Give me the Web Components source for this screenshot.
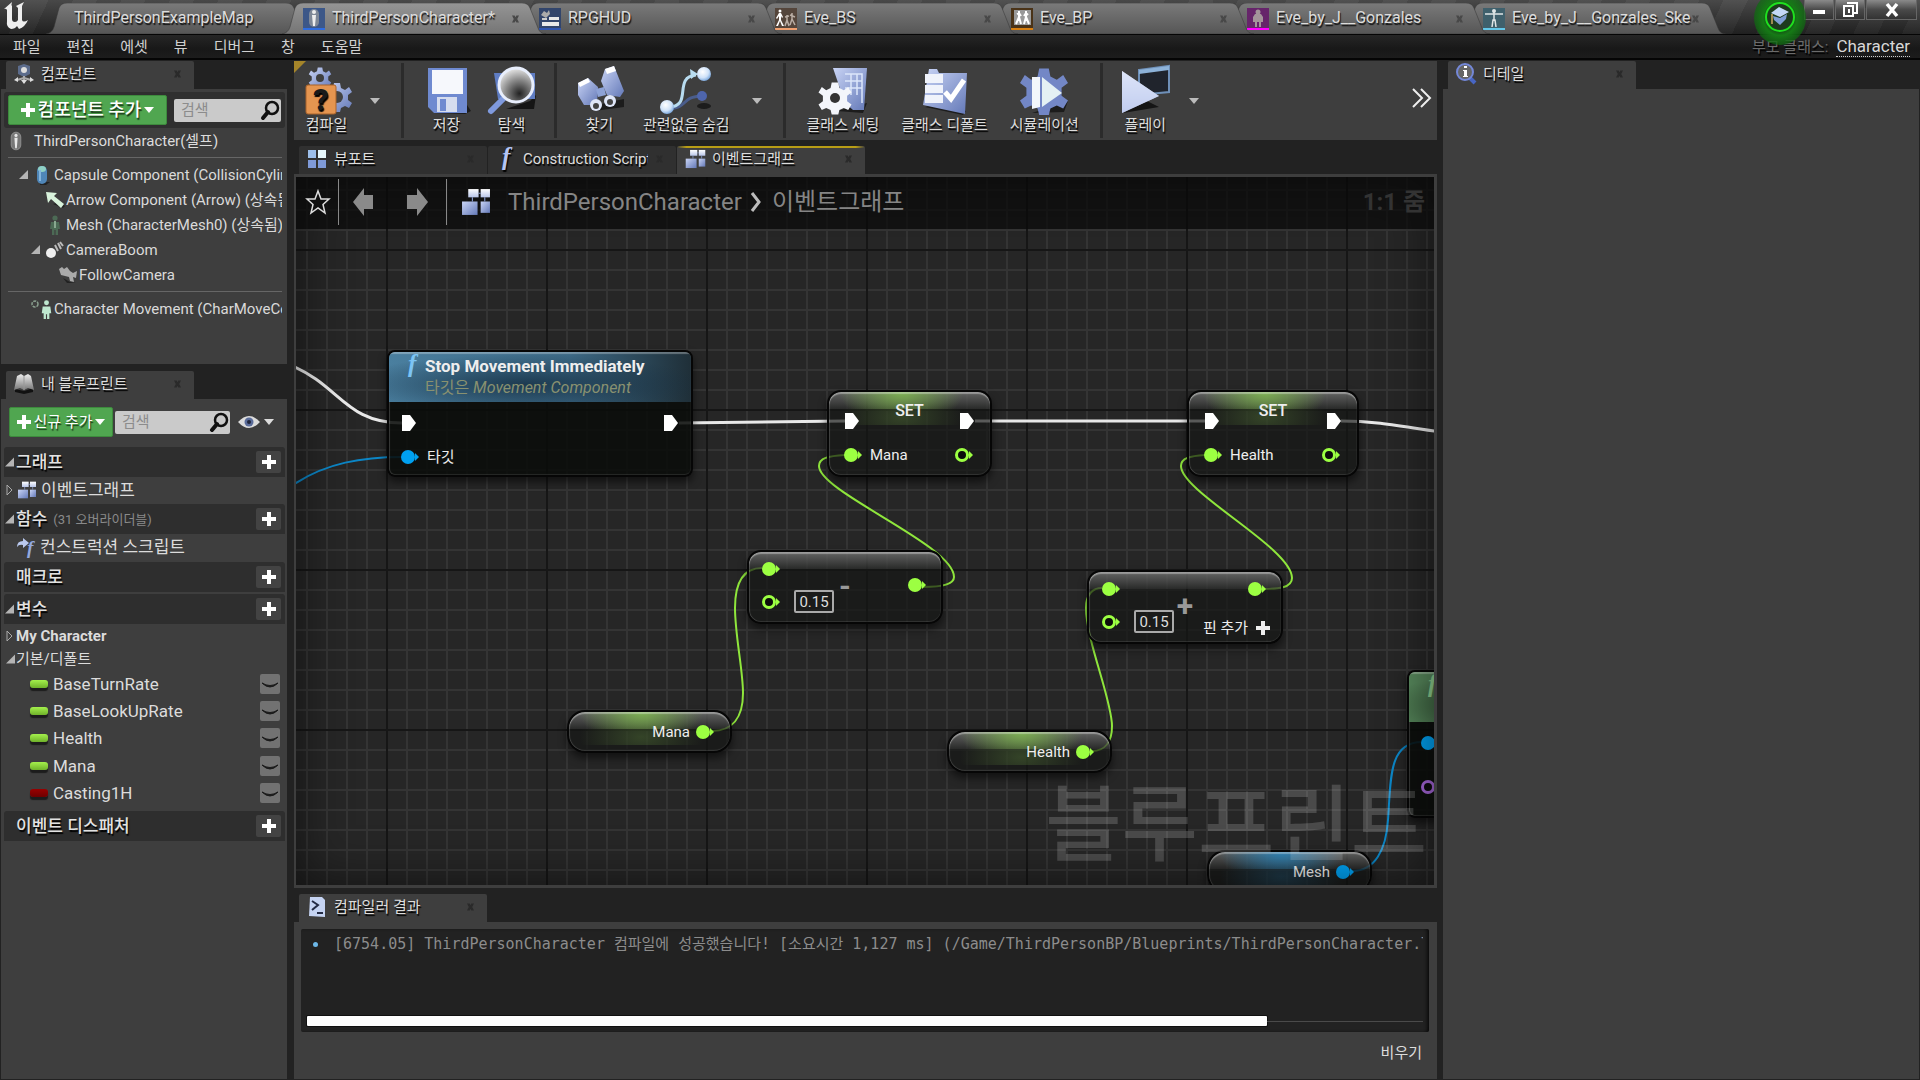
<!DOCTYPE html>
<html lang="ko">
<head>
<meta charset="utf-8">
<title>ThirdPersonCharacter</title>
<style>
  html, body { margin: 0; height: 100%; }
  body {
    background: #222;
    color: #dcdcdc;
    font-family: Roboto, "Noto Sans CJK KR", sans-serif;
    font-size: 15px;
    line-height: 20px;
    overflow: hidden;
  }
</style>
</head>
<body>
<ue-app></ue-app>

<script>
'use strict';

/*
Shared bits
*/

const baseStyle = `
  * { box-sizing: border-box; }
  button {
    margin: 0; padding: 0; border: 0; background: none;
    color: inherit; font: inherit; text-shadow: inherit; cursor: pointer;
  }
  input { font: inherit; margin: 0; }
  ul { list-style: none; margin: 0; padding: 0; }
`;

function define(name, html, setup) {
  const template = document.createElement('template');
  template.innerHTML = html.replace('<style>', '<style>' + baseStyle);
  customElements.define(name, class extends HTMLElement {
    constructor() {
      super();
      this.attachShadow({ mode: 'open' }).appendChild(template.content.cloneNode(true));
    }
    connectedCallback() {
      if (setup) setup(this, this.shadowRoot);
    }
  });
}

/*
Icons.  Each entry is [viewBox, markup]
*/

const defs = `
  <defs>
    <linearGradient id="blue" x1="0" y1="0" x2="1" y2="1"><stop offset="0" stop-color="#c9d4f5"/><stop offset="1" stop-color="#6479b8"/></linearGradient>
    <linearGradient id="pale" x1="0" y1="0" x2="0" y2="1"><stop offset="0" stop-color="#fff"/><stop offset="1" stop-color="#b9c6ea"/></linearGradient>
    <linearGradient id="grey" x1="0" y1="0" x2="0" y2="1"><stop offset="0" stop-color="#eee"/><stop offset="1" stop-color="#777"/></linearGradient>
    <radialGradient id="lens" cx=".6" cy=".75" r=".8"><stop offset="0" stop-color="#222"/><stop offset=".5" stop-color="#888"/><stop offset="1" stop-color="#f4f4f4"/></radialGradient>
    <radialGradient id="ball" cx=".4" cy=".35" r=".7"><stop offset="0" stop-color="#fff"/><stop offset=".6" stop-color="#cfe2f8"/><stop offset="1" stop-color="#6f9fd8"/></radialGradient>
  </defs>`;

const gear = 'M-3-14H3L4-9 8-7 12-10 15-5 11-2V3L15 6 12 11 8 9 4 11 3 15H-3L-4 11-8 9-12 11-15 6-11 3V-2L-15-5-12-10-8-7-4-9Z';

const blocks = `
  <rect x="7" y="1" width="10" height="8" fill="url(#pale)"/><rect x="19" y="1" width="9" height="8" fill="url(#pale)"/>
  <rect x="1" y="13" width="15" height="13" fill="url(#blue)"/><rect x="19" y="13" width="9" height="11" fill="url(#blue)"/>
  <path d="M11 9V13M17 5H19M23 9V13" stroke="#8fa3d9" stroke-width="1"/>`;

const human = '<circle cx="10" cy="4" r="2.6"/><path d="M6 8H14L15 15H13V21H10.600V16H9.400V21H7V15H5Z"/>';

const icons = {
  logo: ['0 0 26 28', '<path d="M1 7 9 0Q8 3 9 4V17Q9 20 12 20Q14 20 15 18V6L13 4 21 0 19 4V18Q20 21 25 18 22 25 16 27L14 24Q12 27 8 27Q3 25 4 19V8Q3 6 1 7Z" fill="#eee"/>'],
  character: ['0 0 20 24', '<rect x="4" y="1" width="12" height="22" rx="6" fill="#777" stroke="#999"/><g fill="#e8e8e8"><circle cx="10" cy="5" r="2"/><path d="M8 8H12L11.500 15 11 21H9L8.500 15Z"/></g>'],
  docCharacter: ['0 0 22 22', '<rect width="22" height="22" fill="#3c5788"/><rect y="20" width="22" height="2" fill="#2f6de0"/><rect x="6" y="1" width="10" height="18" rx="5" fill="#7e8897"/><g fill="#eee"><circle cx="11" cy="4" r="2"/><path d="M9 7H13L12 18H10Z"/></g>'],
  docHud: ['0 0 22 22', '<rect width="22" height="22" fill="#32456b"/><rect y="20" width="22" height="2" fill="#2f55b0"/><path d="M5 3 8 5 10 2 11 6 7 10 2 7Z" fill="#aaa"/><path d="M10 9H20V12H10ZM3 14H20V18H3Z" fill="#e8e8e8"/><path d="M3 10H8V12H3Z" fill="#ccc"/>'],
  docBlend: ['0 0 22 22', '<rect width="22" height="22" fill="#54453b"/><rect y="20" width="22" height="2" fill="#f0a070"/><g fill="#fff"><circle cx="5" cy="3" r="1.500"/><path d="M4 5H6L8 9 7 10 6 8V12L9 18H7L5 13 3 18H1L4 12V8L2 11 1 10Z"/></g><g stroke="#b9ada4" stroke-width="1.500" fill="none"><path d="M12 7V12L10 18M12 12 14 18M17 5V11L15 17M17 11 20 17M10 9 14 8M15 7 20 9"/></g>'],
  docAnim: ['0 0 22 22', '<rect width="22" height="22" fill="#4a3318"/><rect y="20" width="22" height="2" fill="#d87f10"/><rect x="3" y="2" width="17" height="15" fill="#999"/><g stroke="#fff" stroke-width="2" fill="none"><path d="M8 3V9L5 16M8 9 10 16M15 3V9L13 16M15 9 18 16M6 6 8 5 10 8M13 8 15 5 17 7"/></g>'],
  docMesh: ['0 0 22 22', '<rect width="22" height="22" fill="#66256a"/><rect y="20" width="22" height="2" fill="#f0f"/><g fill="#a3949a" transform="translate(1 0)"><circle cx="10" cy="4" r="2.500"/><path d="M7 6H13L15 9V14H13V19H11V14H9V19H7V14H5V9Z"/></g>'],
  docSkeleton: ['0 0 22 22', '<rect width="22" height="22" fill="#3f606c"/><rect y="20" width="22" height="2" fill="#64c8ea"/><g stroke="#dfe5e6" stroke-width="1.500" fill="none"><path d="M2 6H20M11 3V13M9 19 10 12H12L13 19"/></g><circle cx="11" cy="3" r="2" fill="#dfe5e6"/>'],
  components: ['0 0 22 22', '<path d="M5 3 11 1 17 3V11L11 14 5 11Z" fill="#5c6c8c"/><circle cx="11" cy="7" r="3" fill="#ddd"/><path d="M11 13V20M11 15 4 17M11 15 18 17" stroke="#aaa" stroke-width="2"/><path d="M8 17H14L11 21ZM1 17 5 14V19ZM21 17 17 14V19Z" fill="#ddd"/>'],
  blueprint: ['0 0 22 22', '<path d="M2 16 11 18 20 15V19L11 21 2 19Z" fill="#111"/><path d="M4 3 8 1 11 3 15 1 18 3 21 17 15 15 11 17 7 15 1 17Z" fill="url(#grey)"/><path d="M11 3V17" stroke="#999"/>'],
  viewport: ['0 0 20 22', '<path d="M11 2H19V10H11Z" fill="#e6f6fb"/><path d="M1 12H9V20H1ZM11 12H19V20H11Z" fill="#7f9ad8"/><path d="M1 2H9V10H1Z" fill="#9dbfea"/>'],
  fn: ['0 0 16 22', '<text x="4" y="17" font-family="Liberation Serif, serif" font-style="italic" font-weight="700" font-size="25" fill="currentColor">f</text>'],
  blocks: ['0 0 29 27', blocks],
  details: ['0 0 22 24', '<path d="M14 15 20 21" stroke="#4866c4" stroke-width="4"/><circle cx="10" cy="10" r="8" fill="#666" stroke="#7488d8" stroke-width="2"/><path d="M9 4H12V6H9ZM8 8H12V14H13V15H8V14H9V9H8Z" fill="#fff"/>'],
  compiler: ['0 0 18 22', '<path d="M2 1H14L17 4V21L1 20Z" fill="#c5d3f2"/><path d="M4 5 10 9 4 14M9 17H15" stroke="#222a44" stroke-width="2" fill="none"/>'],
  search: ['0 0 20 20', '<circle cx="12" cy="8" r="6" fill="none" stroke="#111" stroke-width="2.500"/><path d="M8 12 3 18" stroke="#111" stroke-width="4" stroke-linecap="round"/>'],
  plus: ['0 0 14 14', '<path d="M5 0H9V5H14V9H9V14H5V9H0V5H5Z" fill="currentColor"/>'],
  down: ['0 0 10 6', '<path d="M0 0H10L5 6Z" fill="currentColor"/>'],
  open: ['0 0 10 10', '<path d="M10 0V10H0Z" fill="#b4b4b4"/>'],
  closed: ['0 0 7 12', '<path d="M1 1 6 6 1 11Z" fill="none" stroke="#aaa"/>'],
  close: ['0 0 8 8', '<path d="M0 0H3L4 2 5 0H8L6 4 8 8H5L4 6 3 8H0L2 4Z" fill="currentColor"/>'],
  capsule: ['0 0 18 20', '<path d="M6 17H16L12 20H6Z" fill="#222"/><rect x="3" y="1" width="10" height="18" rx="5" fill="#4f86b8"/><ellipse cx="8" cy="4" rx="4" ry="3" fill="#8fd0c4"/><path d="M6 5V16" stroke="#83b4dc" stroke-width="2"/>'],
  arrow: ['0 0 20 18', '<path d="M8 13 18 17 20 15 14 11Z" fill="#222"/><path d="M1 1 12 2 9 5 19 13 16 17 6 8 3 12Z" fill="#d9f3dc"/>'],
  mesh: ['0 0 20 22', '<g fill="#4c6a55">' + human + '</g><path d="M9 7H11V14H9Z" fill="#89a890"/>'],
  boom: ['0 0 18 18', '<circle cx="5" cy="12" r="5" fill="#eee"/><path d="M9 4 12 10M12 2 15 8M14 1 17 5" stroke="#bbb" stroke-width="2"/>'],
  camera: ['0 0 20 18', '<path d="M1 3 4 1 6 3 9 1 12 5 15 7 19 5 18 12 15 11 16 16 12 15 11 11 3 9Z" fill="#aaa"/><path d="M5 12 12 16 18 17H9Z" fill="#222"/>'],
  movement: ['0 0 20 20', '<circle cx="2" cy="5" r="3" fill="none" stroke="#8aa08f" stroke-width="1.500" stroke-dasharray="3 1"/><g fill="#bfe8d0" transform="translate(4 0) scale(.95)">' + human + '</g>'],
  construct: ['0 0 20 20', '<path d="M1 10Q1 4 7 4V1L13 6 7 11V8Q3 7 1 10Z" fill="#b9c8ee"/><text x="11" y="17" font-family="Liberation Serif, serif" font-style="italic" font-weight="700" font-size="19" fill="#93a8dd">f</text>'],
  eye: ['0 0 22 14', '<path d="M0 7Q11-5 22 7Q11 19 0 7Z" fill="#dcdcdc"/><circle cx="11" cy="7" r="4.500" fill="#5a6c9a"/><circle cx="11" cy="7" r="2" fill="#20263c"/>'],
  hidden: ['0 0 20 20', '<rect width="20" height="20" rx="2" fill="#727272"/><path d="M2 9Q10 17 18 9Q10 14 2 9Z" fill="#1a1a1a" stroke="#1a1a1a"/>'],
  star: ['0 0 26 26', '<path d="M13 2 16 10 24 10 18 15.500 20 24 13 19 6 24 8 15.500 2 10 10 10Z" fill="none" stroke="#ddd" stroke-width="1.500"/>'],
  back: ['0 0 22 30', '<path d="M0 15 11 1V8H20V22H11V29Z" fill="#8a8a8a"/>'],
  forward: ['0 0 22 30', '<path d="M22 15 11 1V8H1V22H11V29Z" fill="#8a8a8a"/>'],
  crumb: ['0 0 12 20', '<path d="M2 1 9 10 2 19" fill="none" stroke="#bbb" stroke-width="3"/>'],
  more: ['0 0 20 20', '<path d="M1 1 10 10 1 19M9 1 18 10 9 19" fill="none" stroke="#eee" stroke-width="2"/>'],
  tutorial: ['0 0 54 46', '<radialGradient id="g" cy=".5"><stop offset=".3" stop-color="#102a10"/><stop offset=".65" stop-color="#167a16"/><stop offset="1" stop-color="#0e6a10" stop-opacity=".7"/></radialGradient><ellipse cx="27" cy="18" rx="26" ry="27" fill="url(#g)"/><circle cx="27" cy="17" r="14" fill="#1d3a1d" stroke="#1fe01f" stroke-width="2"/><path d="M18 13 26 7 36 12 27 17Z" fill="#c4d8f6"/><path d="M20 16 27 18 34 14 33 19 27 25 21 20Z" fill="#7f9dd4"/><path d="M19 14V24" stroke="#a08a50" stroke-width="2"/>'],
  compile: ['0 0 52 50', `<g transform="translate(19 13) scale(.75)" fill="url(#blue)"><path d="${gear}"/></g><circle cx="19" cy="13" r="4" fill="#3e3e3e"/><g transform="translate(36 32) scale(1)" fill="url(#blue)"><path d="${gear}"/></g><circle cx="36" cy="32" r="6" fill="#444"/><rect x="5" y="20" width="30" height="29" rx="2" fill="#e59550" stroke="#a8622a"/><text x="20" y="45" text-anchor="middle" font-family="Roboto, sans-serif" font-weight="900" font-size="30" fill="#1a1a1a">?</text>`],
  save: ['0 0 52 50', '<path d="M46 40 50 46 44 49 12 48Z" fill="#1c1c1c"/><path d="M7 3H46V48H13L7 42Z" fill="#6f8ad0"/><rect x="11" y="5" width="31" height="24" fill="#f6f8fc"/><rect x="16" y="32" width="20" height="15" fill="#d6ddef"/><rect x="19" y="34" width="6" height="12" fill="#6f8ad0"/>'],
  browse: ['0 0 52 50', '<path d="M20 44H48L50 30 44 36Z" fill="#151515"/><path d="M8 8H49V34H12Z" fill="#5f7dc4"/><path d="M17 34 5 46" stroke="#7f9ade" stroke-width="6" stroke-linecap="round"/><circle cx="30" cy="20" r="17" fill="url(#lens)" stroke="#e8eefc" stroke-width="3"/>'],
  find: ['0 0 52 50', '<path d="M20 46 50 42V34L30 38Z" fill="#1c1c1c"/><path d="M4 18 14 13 24 22 23 40 10 40 4 30Z" fill="url(#blue)"/><path d="M31 4 40 1 50 26 46 32 33 30 27 16Z" fill="url(#blue)"/><path d="M22 24 30 22 32 30 24 32Z" fill="#8da2d6"/><path d="M4 18 14 13 16 17 6 22ZM31 4 40 1 42 6 33 9Z" fill="#fff"/><circle cx="22" cy="40" r="6" fill="#dfe6f8"/><circle cx="36" cy="36" r="6" fill="#dfe6f8"/><circle cx="22" cy="41" r="3" fill="#444"/><circle cx="36" cy="37" r="3" fill="#444"/>'],
  hide: ['0 0 52 50', '<ellipse cx="44" cy="41" rx="7" ry="3" fill="#1c1c1c"/><path d="M8 44C30 42 20 32 42 31" fill="none" stroke="#4a5d8c" stroke-width="3"/><circle cx="42" cy="31" r="5" fill="#4e65ac"/><path d="M8 42C34 42 12 12 36 10" fill="none" stroke="#b8dcf0" stroke-width="3"/><path d="M30 4 38 9 31 14Z" fill="#b8dcf0"/><circle cx="7" cy="42" r="7" fill="url(#ball)"/><circle cx="44" cy="9" r="7" fill="url(#ball)"/>'],
  settings: ['0 0 52 50', '<path d="M20 46 46 48 50 38Z" fill="#1c1c1c"/><path d="M16 3H50L47 45H36L28 38Z" fill="url(#blue)"/><path d="M28 9H45V38M28 16H45M28 23H45M34 9V30M40 9V30" stroke="#dce6fa" stroke-width="1.500" fill="none"/><g transform="translate(18 33) scale(1.1)" fill="#f4f6fb"><path d="'+ gear +'"/></g><circle cx="18" cy="33" r="5" fill="#333"/>'],
  defaults: ['0 0 52 50', '<path d="M6 42 44 50 47 46 20 38Z" fill="#1c1c1c"/><path d="M10 4H18L20 8H48L46 49 4 40Z" fill="url(#blue)"/><path d="M6 9H24V18H6ZM6 20H24V28H6ZM6 30H24V38H6Z" fill="#f0f3fb"/><path d="M26 27 32 34 45 15" fill="none" stroke="#fff" stroke-width="5"/>'],
  simulate: ['0 0 52 50', '<path d="M14 48 46 47 50 36Z" fill="#1c1c1c"/><g transform="translate(26 26) scale(1.600)" fill="#7387c6"><path d="'+ gear +'"/></g><path d="M14 12H22V42L14 44Z" fill="#f2f6fb"/><path d="M24 12 44 28 24 42Z" fill="#e4f1f4"/>'],
  play: ['0 0 52 50', '<path d="M4 48 40 42 28 36Z" fill="#151515"/><path d="M20 5 50 1V27L20 30Z" fill="#20242c" stroke="#6f90b8" stroke-width="2"/><path d="M20 5 50 1V5L20 9Z" fill="#8db2d8"/><path d="M3 6 40 31 3 48Z" fill="url(#pale)"/><path d="M3 6 40 31 3 48Z" fill="#c6d2f4" opacity=".6"/>'],
  minimize: ['0 0 20 20', '<path d="M4 10H16V14H4Z" fill="#fff"/>'],
  restore: ['0 0 20 20', '<path d="M7 3H17V13H14M4 6H13V16H4Z" fill="none" stroke="#fff" stroke-width="2"/><rect x="8" y="9" width="2" height="4" fill="#fff"/>'],
  exit: ['0 0 20 20', '<path d="M5 4 15 16M15 4 5 16" stroke="#fff" stroke-width="3.500"/>'],
  exec: ['0 0 16 18', '<path d="M1 1H9L15 9 9 17H1Z" fill="#fff"/>'],
  pin: ['0 0 20 18', '<circle cx="7" cy="9" r="7" fill="currentColor"/><path d="M14 5 18 9 14 13Z" fill="currentColor"/>'],
  pinEmpty: ['0 0 20 18', '<circle cx="7" cy="9" r="5.500" fill="#0c0c0c" stroke="currentColor" stroke-width="3"/><path d="M14 5 18 9 14 13Z" fill="currentColor"/>'],
};

customElements.define('ue-icon', class extends HTMLElement {
  constructor() {
    super();
    this.attachShadow({ mode: 'open' });
  }
  connectedCallback() {
    const [box, markup] = icons[this.getAttribute('name')];
    const [, , bw, bh] = box.split(' ');
    const w = this.getAttribute('w') || bw;
    const h = this.getAttribute('h') || bh;
    this.shadowRoot.innerHTML = `
      <style>:host { display: inline-flex; flex: none; } svg { display: block; overflow: visible; }</style>
      <svg viewBox="${box}" width="${w}" height="${h}" aria-hidden="true">${defs}${markup}</svg>`;
  }
});

/*
Title bar
*/

define('ue-doc-tab', `
<style>
  :host {
    display: flex; align-items: center; position: relative; flex: none;
    width: 264px; height: 31px; margin-right: -28px; padding: 0 27px 0 21px;
    color: #ddd; font-size: 16px; text-shadow: 1px 2px 1px #111;
  }
  .shape { position: absolute; inset: 0; z-index: -1; }
  .top { stop-color: #7a7a7a; }
  .bottom { stop-color: #565656; }
  :host([active]) .top { stop-color: #959595; }
  :host([active]) .bottom { stop-color: #757575; }
  .text { flex: 1; overflow: hidden; white-space: nowrap; margin-left: 7px; padding-bottom: 2px; }
  .x { color: #484848; }
</style>
<svg class="shape" width="264" height="31" viewBox="0 0 264 31" aria-hidden="true">
  <linearGradient id="fill" x1="0" y1="0" x2="0" y2="1"><stop class="top" offset="0"/><stop class="bottom" offset="1"/></linearGradient>
  <path d="M0 31Q6 30 8 24L13 5Q15 0 21 0H240Q246 0 248 5L256 25Q258 31 264 31Z" fill="url(#fill)" stroke="#333" stroke-opacity=".5"/>
</svg>
<slot name="icon"></slot><span class="text"><slot></slot></span><ue-icon class="x" name="close" w="7" h="8"></ue-icon>
`, (host, root) => {
  if (host.hasAttribute('home')) root.querySelector('.x').remove();
});

define('ue-title-bar', `
<style>
  :host {
    display: flex; align-items: flex-end; height: 34px; padding-left: 3px; isolation: isolate; position: relative;
    background:
      linear-gradient(rgba(90,90,90,.45), rgba(10,10,10,.55)),
      repeating-linear-gradient(115deg, #3a3a3a 0 22px, #4a4a4a 22px 44px);
  }
  .logo { width: 43px; align-self: flex-start; padding-top: 2px; }
  ue-doc-tab:nth-of-type(1) { z-index: 6; }
  ue-doc-tab:nth-of-type(2) { z-index: 7; }
  ue-doc-tab:nth-of-type(3) { z-index: 5; }
  ue-doc-tab:nth-of-type(4) { z-index: 4; }
  ue-doc-tab:nth-of-type(5) { z-index: 3; }
  ue-doc-tab:nth-of-type(6) { z-index: 2; }
  ue-doc-tab:nth-of-type(7) { z-index: 1; }
  .right { margin-left: auto; display: flex; align-self: flex-start; gap: 1px; padding-right: 3px; }
  .tutorial { position: relative; z-index: 9; height: 34px; margin-right: -4px; align-items: flex-start; display: flex; }
  .right button:not(.tutorial) {
    width: 30px; height: 20px; display: flex; align-items: center; justify-content: center;
    border: 1px solid #666; border-top: 0; background: linear-gradient(#8a8a8a, #4a4a4a 50%, #333);
  }
  .right .exit { width: 51px !important; }
</style>
<ue-icon class="logo" name="logo"></ue-icon>
<ue-doc-tab home>ThirdPersonExampleMap</ue-doc-tab>
<ue-doc-tab active><ue-icon slot="icon" name="docCharacter"></ue-icon>ThirdPersonCharacter*</ue-doc-tab>
<ue-doc-tab><ue-icon slot="icon" name="docHud"></ue-icon>RPGHUD</ue-doc-tab>
<ue-doc-tab><ue-icon slot="icon" name="docBlend"></ue-icon>Eve_BS</ue-doc-tab>
<ue-doc-tab><ue-icon slot="icon" name="docAnim"></ue-icon>Eve_BP</ue-doc-tab>
<ue-doc-tab><ue-icon slot="icon" name="docMesh"></ue-icon>Eve_by_J__Gonzales</ue-doc-tab>
<ue-doc-tab><ue-icon slot="icon" name="docSkeleton"></ue-icon>Eve_by_J__Gonzales_Ske</ue-doc-tab>
<div class="right">
  <button class="tutorial" aria-label="튜토리얼"><ue-icon name="tutorial"></ue-icon></button>
  <button aria-label="최소화"><ue-icon name="minimize"></ue-icon></button>
  <button aria-label="복원"><ue-icon name="restore"></ue-icon></button>
  <button class="exit" aria-label="닫기"><ue-icon name="exit"></ue-icon></button>
</div>
`);

define('ue-menu-bar', `
<style>
  :host {
    display: flex; align-items: center; height: 26px; border: 1px solid #050505; border-width: 1px 0 2px;
    background: linear-gradient(#262626, #181818 60%, #1c1c1c); color: #d0d0d0;
  }
  button { padding: 0 13px; height: 20px; }
  .parent { margin-left: auto; color: #6c6c6c; text-shadow: 1px 2px 1px #000; }
  a { color: #d8d8d8; margin: 0 10px 0 8px; font-size: 17px; line-height: 19px; text-decoration: none; border-bottom: 1px dotted #ccc; }
</style>
<button>파일</button><button>편집</button><button>에셋</button><button>뷰</button><button>디버그</button><button>창</button><button>도움말</button>
<span class="parent">부모 클래스:</span><a href="#">Character</a>
`);

/*
Docked panels
*/

define('ue-panel-tab', `
<style>
  :host {
    display: flex; align-items: center; flex: none; width: 188px; height: 28px; padding: 0 13px 2px 7px;
    background: #3e3e3e; border-radius: 2px 2px 0 0; color: #ddd; text-shadow: 1px 2px 1px #000;
  }
  :host([idle]) { background: #303030; }
  :host([current]) { background: linear-gradient(90deg, transparent, #b89d16 5% 95%, transparent) 0 0 / 100% 2px no-repeat #3e3e3e; }
  .icon { width: 22px; display: flex; justify-content: center; }
  .text { flex: 1; overflow: hidden; white-space: nowrap; margin: 0 12px 0 6px; }
  .x { color: #2a2a2a; margin-left: -4px; }
</style>
<span class="icon"><slot name="icon"></slot></span><span class="text"><slot></slot></span><ue-icon class="x" name="close" w="7" h="8"></ue-icon>
`);

define('ue-search', `
<style>
  :host { display: flex; flex: none; align-items: center; height: 23px; background: #cacaca; border-radius: 2px; padding-right: 1px; }
  input { flex: 1; min-width: 0; width: 0; border: 0; background: none; padding: 0 0 0 7px; outline: 0; color: #222; height: 23px; }
  input::placeholder { color: #8c8c8c; opacity: 1; }
</style>
<input type="text" placeholder="검색" aria-label="검색"><ue-icon name="search"></ue-icon>
`);

define('ue-green-button', `
<style>
  :host { display: flex; flex: none; height: 30px; }
  button {
    flex: 1; display: flex; align-items: center; justify-content: center; gap: 3px; color: #fff; white-space: nowrap;
    background: #50a650; border: 1px solid #3d8a3d; border-radius: 2px; text-shadow: 1px 2px 1px #1a3a1a;
  }
</style>
<button><ue-icon name="plus"></ue-icon><slot></slot><ue-icon name="down"></ue-icon></button>
`);

define('ue-tree-row', `
<style>
  :host { display: flex; align-items: center; height: 25px; white-space: nowrap; overflow: hidden; color: #dadada; }
  .icon { display: flex; flex: none; justify-content: center; width: 20px; margin-right: 1px; }
  .twist { flex: none; width: 14px; display: flex; }
</style>
<span class="twist"></span><span class="icon"><slot name="icon"></slot></span><slot></slot>
`, (host, root) => {
  host.style.paddingLeft = (host.getAttribute('depth') || 0) + 'px';
  if (host.hasAttribute('open')) root.querySelector('.twist').innerHTML = '<ue-icon name="open" w="9" h="9"></ue-icon>';
});

define('ue-components-panel', `
<style>
  :host { display: block; }
  .tab { padding: 1px 0 0 5px; }
  .body { background: #3e3e3e; height: 275px; padding: 3px 2px 0 3px; }
  .bar { display: flex; align-items: center; gap: 7px; background: #2f2f2f; height: 36px; padding: 0 4px; border-radius: 3px; }
  ue-green-button { width: 159px; font-size: 18px; font-weight: 500; }
  ue-search { flex: 1; }
  .tree { padding: 0 3px 0 4px; }
  hr { border: 0; height: 1px; background: #666; margin: 4px 0; }
  .self { display: flex; align-items: center; height: 25px; gap: 10px; }
</style>
<div class="tab"><ue-panel-tab><ue-icon slot="icon" name="components"></ue-icon>컴포넌트</ue-panel-tab></div>
<div class="body">
  <div class="bar"><ue-green-button>컴포넌트 추가</ue-green-button><ue-search></ue-search></div>
  <div class="tree">
    <div class="self"><ue-icon name="character" w="16" h="20"></ue-icon><span>ThirdPersonCharacter(셀프)</span></div>
    <hr>
    <ue-tree-row depth="11" open><ue-icon slot="icon" name="capsule"></ue-icon>Capsule Component (CollisionCylinder)</ue-tree-row>
    <ue-tree-row depth="23"><ue-icon slot="icon" name="arrow"></ue-icon>Arrow Component (Arrow) (상속됨)</ue-tree-row>
    <ue-tree-row depth="23"><ue-icon slot="icon" name="mesh"></ue-icon>Mesh (CharacterMesh0) (상속됨)</ue-tree-row>
    <ue-tree-row depth="23" open><ue-icon slot="icon" name="boom"></ue-icon>CameraBoom</ue-tree-row>
    <ue-tree-row depth="36"><ue-icon slot="icon" name="camera"></ue-icon>FollowCamera</ue-tree-row>
    <hr>
    <ue-tree-row depth="11"><ue-icon slot="icon" name="movement"></ue-icon>Character Movement (CharMoveComp)</ue-tree-row>
  </div>
</div>
`);

define('ue-section', `
<style>
  :host {
    display: flex; align-items: center; height: 30px; margin: 0 2px 0 3px; padding: 0 4px 0 1px; background: #2e2e2e;
    border-radius: 3px 3px 0 0; font-size: 17px; font-weight: 500; color: #e2e2e2; text-shadow: 1px 2px 1px #000;
  }
  .twist { width: 11px; flex: none; display: flex; }
  ::slotted(small) { font-size: 13px; font-weight: 400; color: #8a8a8a; margin-left: 6px; padding-top: 2px; text-shadow: none; }
  button {
    margin-left: auto; width: 25px; height: 22px; border-radius: 2px; background: #434343; color: #fff;
    display: flex; align-items: center; justify-content: center;
  }
</style>
<span class="twist"></span><slot></slot><button aria-label="추가"><ue-icon name="plus"></ue-icon></button>
`, (host, root) => {
  if (host.hasAttribute('open')) root.querySelector('.twist').innerHTML = '<ue-icon name="open" w="9" h="10"></ue-icon>';
});

define('ue-variable', `
<style>
  :host { display: flex; align-items: center; padding: 0 7px 0 29px; font-size: 17px; }
  i { width: 18px; height: 8px; border-radius: 3px; margin-right: 5px; background: linear-gradient(#a4f04c, #6fb22a); box-shadow: 0 3px 1px #1c1c1c; }
  :host([type="bool"]) i { background: linear-gradient(#990000, #6e0000); }
  button { margin-left: auto; display: flex; }
</style>
<i></i><slot></slot><button aria-label="공개"><ue-icon name="hidden"></ue-icon></button>
`);

define('ue-my-blueprint', `
<style>
  :host { display: flex; flex-direction: column; }
  .tab { padding-left: 5px; }
  .body { flex: 1; background: #3e3e3e; }
  .bar { display: flex; align-items: center; padding: 8px 0 10px 8px; }
  ue-green-button { width: 104px; margin-right: 2px; }
  ue-search { width: 115px; margin-right: 8px; }
  .eye { display: flex; align-items: center; gap: 4px; }
  .row { display: flex; align-items: center; gap: 4px; height: 27px; padding: 0 0 2px 5px; font-size: 17px; }
  .item { height: 28px; padding-left: 15px; }
  .cat { height: 23px; padding-bottom: 0; font-size: 15px; }
  .cat ue-icon { width: 7px; margin-right: -1px; }
  ue-section + ue-section { margin-top: 2px; }
  .vars { display: grid; grid-auto-rows: 1fr; height: 141px; padding-bottom: 4px; }
</style>
<div class="tab"><ue-panel-tab><ue-icon slot="icon" name="blueprint"></ue-icon>내 블루프린트</ue-panel-tab></div>
<div class="body">
  <div class="bar">
    <ue-green-button>신규 추가</ue-green-button><ue-search></ue-search>
    <button class="eye" aria-label="보기 옵션"><ue-icon name="eye"></ue-icon><ue-icon name="down"></ue-icon></button>
  </div>
  <ue-section open>그래프</ue-section>
  <div class="row"><ue-icon name="closed"></ue-icon><ue-icon name="blocks" w="20" h="18"></ue-icon>이벤트그래프</div>
  <ue-section open>함수<small>(31 오버라이더블)</small></ue-section>
  <div class="row item"><ue-icon name="construct"></ue-icon>컨스트럭션 스크립트</div>
  <ue-section>매크로</ue-section>
  <ue-section open>변수</ue-section>
  <div class="row cat"><ue-icon name="closed"></ue-icon><b>My Character</b></div>
  <div class="row cat"><ue-icon name="open" w="9" h="10"></ue-icon>기본/디폴트</div>
  <div class="vars">
    <ue-variable>BaseTurnRate</ue-variable>
    <ue-variable>BaseLookUpRate</ue-variable>
    <ue-variable>Health</ue-variable>
    <ue-variable>Mana</ue-variable>
    <ue-variable type="bool">Casting1H</ue-variable>
  </div>
  <ue-section>이벤트 디스패처</ue-section>
</div>
`);

/*
Toolbar
*/

define('ue-tool-button', `
<style>
  :host { display: flex; }
  button { min-width: 65px; padding: 4px 11px 0; display: flex; flex-direction: column; align-items: center; white-space: nowrap; text-shadow: 1px 2px 1px #000; }
  ::slotted(ue-icon) { margin: 0 -6px; }
</style>
<button><slot name="icon"></slot><slot></slot></button>
`);

define('ue-toolbar', `
<style>
  :host { display: flex; height: 79px; background: linear-gradient(135deg, #a5852a 8px, transparent 9px) #3e3e3e; color: #ddd; }
  .drop { width: 32px; display: flex; align-items: center; justify-content: center; color: #bbb; }
  .sep { width: 3px; margin: 2px 10px; background: #2b2b2b; }
  .more { margin-left: auto; padding-right: 5px; }
</style>
<ue-tool-button><ue-icon slot="icon" name="compile"></ue-icon>컴파일</ue-tool-button>
<button class="drop" aria-label="컴파일 옵션"><ue-icon name="down"></ue-icon></button>
<span class="sep"></span>
<ue-tool-button><ue-icon slot="icon" name="save"></ue-icon>저장</ue-tool-button>
<ue-tool-button><ue-icon slot="icon" name="browse"></ue-icon>탐색</ue-tool-button>
<span class="sep"></span>
<ue-tool-button><ue-icon slot="icon" name="find"></ue-icon>찾기</ue-tool-button>
<ue-tool-button><ue-icon slot="icon" name="hide"></ue-icon>관련없음 숨김</ue-tool-button>
<button class="drop" aria-label="숨김 옵션"><ue-icon name="down"></ue-icon></button>
<span class="sep"></span>
<ue-tool-button><ue-icon slot="icon" name="settings"></ue-icon>클래스 세팅</ue-tool-button>
<ue-tool-button><ue-icon slot="icon" name="defaults"></ue-icon>클래스 디폴트</ue-tool-button>
<ue-tool-button><ue-icon slot="icon" name="simulate"></ue-icon>시뮬레이션</ue-tool-button>
<span class="sep"></span>
<ue-tool-button><ue-icon slot="icon" name="play"></ue-icon>플레이</ue-tool-button>
<button class="drop" aria-label="플레이 옵션"><ue-icon name="down"></ue-icon></button>
<button class="more" aria-label="더 보기"><ue-icon name="more"></ue-icon></button>
`);

/*
Graph nodes.  kind = func | set | op | var
*/

define('bp-node', `
<style>
  :host {
    --tint: 130, 190, 80;
    display: block; position: absolute; color: #eee;
    border: 2px solid #060606; border-radius: 14px;
    box-shadow: 0 5px 8px rgba(0,0,0,.55), inset 0 2px 1px rgba(255,255,255,.35), inset 1px 0 1px rgba(255,255,255,.15), inset 0 -1px 1px rgba(255,255,255,.1);
    background:
      linear-gradient(rgba(200,200,200,.42), rgba(120,120,120,.16) 17px, transparent 17px),
      rgba(20,22,20,.68);
  }
  :host([kind="set"]), :host([kind="var"]) {
    background:
      radial-gradient(ellipse 62px 34px at 45% 0, rgba(var(--tint), .85), transparent) 0 0 / 100% 17px no-repeat,
      radial-gradient(ellipse 62px 32px at 45% 50%, rgba(var(--tint), .25), transparent) 0 17px / 100% 16px no-repeat,
      linear-gradient(rgba(200,200,200,.42), rgba(120,120,120,.16) 17px, transparent 17px),
      rgba(20,22,20,.68);
  }
  :host([kind="var"]) { border-radius: 18px; }
  :host([tint="blue"]) { --tint: 40, 140, 200; }
  :host([kind="func"]) { border-radius: 8px; background: rgba(10,12,10,.88); overflow: hidden; }
  .head { display: none; }
  :host([kind="func"]) .head {
    display: flex; gap: 5px; height: 50px; padding: 3px 10px 0 15px; color: #7cc4f4;
    background: radial-gradient(ellipse 60% 60% at 45% 65%, rgba(20,45,65,.8), transparent), linear-gradient(90deg, #4a7f9f, #3c6884 60%, #1f2f38);
    box-shadow: inset 0 2px 1px rgba(255,255,255,.3);
  }
  :host([tint="green"]) .head { color: #8fcf8f !important; background: radial-gradient(ellipse 60% 60% at 45% 65%, rgba(40,65,40,.8), transparent), #55855a !important; }
  .head div { display: flex; flex-direction: column; white-space: nowrap; }
  ::slotted([slot="title"]) { font-weight: 700; font-size: 17px; line-height: 22px; color: #eee; }
  ::slotted([slot="sub"]) { font-style: italic; font-size: 16px; line-height: 22px; color: #899170; }
  .over { position: absolute; left: 0; right: 0; text-align: center; font-weight: 500; font-size: 16px; top: 9px; pointer-events: none; }
  :host([kind="op"]) .over { top: 24px; color: #999; font-size: 30px; font-weight: 700; }
</style>
<div class="head"><ue-icon name="fn"></ue-icon><div><slot name="title"></slot><slot name="sub"></slot></div></div>
<div class="over"><slot name="over"></slot></div>
<slot></slot>
`);

define('bp-row', `
<style>
  :host { display: flex; align-items: center; height: 34px; gap: 6px; color: #eee; }
  ::slotted([end]) { margin-left: auto; }
</style>
<slot></slot>
`);

define('bp-pin', `
<style>
  :host { display: flex; align-items: center; flex: none; color: #9cff42; }
  :host([type="object"]) { color: #00a0f0; }
  :host([type="name"]) { color: #a566d8; }
</style>
`, (host, root) => {
  const icon = document.createElement('ue-icon');
  icon.setAttribute('name', host.getAttribute('type') == 'exec' ? 'exec' : host.hasAttribute('empty') ? 'pinEmpty' : 'pin');
  root.appendChild(icon);
});

define('ue-graph', `
<style>
  :host { display: block; position: relative; overflow: hidden; border: 3px solid #3e3e3e; border-left-width: 2px; background: #262626; }
  .grid, .shade { position: absolute; inset: 0; }
  .grid {
    background:
      linear-gradient(90deg, #161616 2px, transparent 2px) 90px 0 / 160px 100%,
      linear-gradient(#161616 2px, transparent 2px) 0 72px / 100% 160px,
      linear-gradient(90deg, #343434 2px, transparent 2px) 10px 0 / 20px 100%,
      linear-gradient(#343434 2px, transparent 2px) 0 12px / 100% 20px;
  }
  .shade { box-shadow: inset 0 0 50px rgba(0,0,0,.55); pointer-events: none; }
  .wires { position: absolute; left: 0; top: 0; fill: none; }
  .mark { position: absolute; right: 7px; bottom: 11px; font-size: 83px; line-height: 96px; font-weight: 500; color: rgba(255,255,255,.17); pointer-events: none; }
  .head {
    position: relative; display: flex; align-items: center; height: 52px; background: rgba(8,8,8,.7);
    font-size: 24px; line-height: 30px; color: #858585; padding: 0 9px 2px 9px;
  }
  .head button { display: flex; }
  .line { width: 1px; height: 46px; background: #888; margin: 0 14px 0 7px; }
  .zoom { margin-left: auto; font-weight: 700; color: #333; }
  .set { padding: 12px 15px 0; }
  .op { padding: 0 13px; display: flex; justify-content: space-between; align-items: center; }
  .op bp-row { height: 33px; }
  .plus { align-items: flex-start; }
  .func { padding: 4px 12px 0; }
  .var { display: flex; align-items: center; justify-content: flex-end; gap: 6px; height: 39px; padding-right: 14px; }
  input { width: 40px; height: 23px; margin-left: 6px; background: none; border: 2px solid #aaa; border-radius: 2px; color: #ddd; text-align: center; padding: 0; }
  .add { position: absolute; right: 11px; bottom: 4px; display: flex; align-items: center; gap: 8px; }
  .upright { font-style: normal; }
</style>
<div class="grid"></div>
<svg class="wires" width="1138" height="707" viewBox="296 177 1138 707" aria-hidden="true">
  <g stroke="#e8e8e8" stroke-width="3">
    <path d="M290 365C340 385 345 423 402 423"/>
    <path d="M679 423L845 421"/>
    <path d="M975 421H1205"/>
    <path d="M1341 421C1375 421 1400 426 1440 432"/>
  </g>
  <g stroke="#8fe63c" stroke-width="2">
    <path d="M923 587C940 587 954 585 954 577C954 545 819 492 819 466C819 458 828 456 845 455"/>
    <path d="M1262 589C1278 589 1292 588 1292 578C1292 548 1181 492 1181 466C1181 458 1190 456 1205 455"/>
    <path d="M712 731C732 731 743 718 743 693C743 670 735 635 735 608C735 580 745 568 762 568"/>
    <path d="M1092 751C1105 751 1112 742 1112 726C1112 700 1086 640 1086 608C1086 594 1093 588 1102 588"/>
  </g>
  <g stroke="#0c86c6" stroke-width="2">
    <path d="M290 487C325 462 365 457 402 457"/>
    <path d="M1352 871C1375 871 1386 850 1388 820C1391 780 1388 742 1422 742"/>
  </g>
</svg>

<bp-node kind="func" style="left:91px;top:173px;width:306px;height:127px">
  <span slot="title">Stop Movement Immediately</span><span slot="sub"><span class="upright">타깃은</span> Movement Component</span>
  <div class="func">
    <bp-row><bp-pin type="exec"></bp-pin><bp-pin type="exec" end></bp-pin></bp-row>
    <bp-row><bp-pin type="object"></bp-pin>타깃</bp-row>
  </div>
</bp-node>
<bp-node kind="set" style="left:531px;top:213px;width:165px;height:87px">
  <span slot="over">SET</span>
  <div class="set">
    <bp-row><bp-pin type="exec"></bp-pin><bp-pin type="exec" end></bp-pin></bp-row>
    <bp-row><bp-pin></bp-pin>Mana<bp-pin empty end></bp-pin></bp-row>
  </div>
</bp-node>
<bp-node kind="set" style="left:891px;top:213px;width:172px;height:87px">
  <span slot="over">SET</span>
  <div class="set">
    <bp-row><bp-pin type="exec"></bp-pin><bp-pin type="exec" end></bp-pin></bp-row>
    <bp-row><bp-pin></bp-pin>Health<bp-pin empty end></bp-pin></bp-row>
  </div>
</bp-node>
<bp-node kind="op" style="left:451px;top:373px;width:196px;height:74px">
  <span slot="over">-</span>
  <div class="op">
    <div>
      <bp-row><bp-pin></bp-pin></bp-row>
      <bp-row><bp-pin empty></bp-pin><input type="text" value="0.15" aria-label="값"></bp-row>
    </div>
    <bp-row><bp-pin></bp-pin></bp-row>
  </div>
</bp-node>
<bp-node kind="op" style="left:791px;top:393px;width:196px;height:74px">
  <span slot="over">+</span>
  <div class="op plus">
    <div>
      <bp-row><bp-pin></bp-pin></bp-row>
      <bp-row><bp-pin empty></bp-pin><input type="text" value="0.15" aria-label="값"></bp-row>
    </div>
    <bp-row><bp-pin></bp-pin></bp-row>
  </div>
  <button class="add">핀 추가 <ue-icon name="plus"></ue-icon></button>
</bp-node>
<bp-node kind="var" style="left:271px;top:533px;width:165px;height:43px"><div class="var">Mana<bp-pin></bp-pin></div></bp-node>
<bp-node kind="var" style="left:651px;top:553px;width:165px;height:43px"><div class="var">Health<bp-pin></bp-pin></div></bp-node>
<bp-node kind="var" tint="blue" style="left:911px;top:673px;width:165px;height:43px"><div class="var">Mesh<bp-pin type="object"></bp-pin></div></bp-node>
<bp-node kind="func" tint="green" style="left:1111px;top:493px;width:200px;height:148px">
  <div class="func">
    <bp-row><bp-pin type="object"></bp-pin></bp-row>
    <bp-row style="margin-top:10px"><bp-pin type="name" empty></bp-pin></bp-row>
  </div>
</bp-node>

<div class="mark">블루프린트</div>
<div class="shade"></div>
<div class="head">
  <button aria-label="즐겨찾기"><ue-icon name="star"></ue-icon></button><span class="line"></span>
  <button aria-label="뒤로"><ue-icon name="back"></ue-icon></button>
  <button aria-label="앞으로" style="margin-left:31px"><ue-icon name="forward"></ue-icon></button>
  <span class="line" style="margin-left:18px"></span>
  <ue-icon name="blocks" w="30" h="28"></ue-icon>
  <span style="margin-left:17px">ThirdPersonCharacter</span>
  <ue-icon name="crumb" style="margin:0 10px 0 8px"></ue-icon>
  <span>이벤트그래프</span>
  <span class="zoom">1:1 줌</span>
</div>
`);

/*
Compiler results
*/

define('ue-compiler-results', `
<style>
  :host { display: block; }
  .tab { padding-left: 5px; }
  .body { background: #3e3e3e; padding: 7px 8px 0 7px; height: 157px; }
  .log {
    height: 103px; background: #222; border-radius: 2px; padding: 5px 6px 6px; display: flex; flex-direction: column; justify-content: space-between;
    color: #8c8c8c; font-family: "DejaVu Sans Mono", "Noto Sans CJK KR", monospace; box-shadow: inset -3px 0 4px -2px #000;
  }
  .line { display: flex; align-items: center; white-space: nowrap; overflow: hidden; }
  .dot { flex: none; width: 5px; height: 5px; border-radius: 3px; background: #6db8e8; margin: 0 16px 0 6px; }
  .scroll { height: 10px; display: flex; align-items: center; }
  .thumb { width: 86%; height: 10px; background: #fff; border-radius: 1px; box-shadow: 0 0 0 1px #111; }
  .track { flex: 1; height: 1px; background: #4a4a4a; }
  .clear { display: block; margin: 11px 7px 0 auto; }
</style>
<div class="tab"><ue-panel-tab><ue-icon slot="icon" name="compiler"></ue-icon>컴파일러 결과</ue-panel-tab></div>
<div class="body">
  <div class="log">
    <div class="line"><span class="dot"></span><span>[6754.05] ThirdPersonCharacter 컴파일에 성공했습니다! [소요시간 1,127 ms] (/Game/ThirdPersonBP/Blueprints/ThirdPersonCharacter.ThirdPersonCharacter)</span></div>
    <div class="scroll"><span class="thumb"></span><span class="track"></span></div>
  </div>
  <button class="clear">비우기</button>
</div>
`);

/*
Whole window
*/

define('ue-app', `
<style>
  :host { display: flex; flex-direction: column; height: 100vh; }
  .work { flex: 1; min-height: 0; display: grid; grid-template-columns: 287px minmax(0, 1fr) 476px; gap: 6px; padding: 0 1px 1px; }
  .left, .center, .right { display: flex; flex-direction: column; min-height: 0; }
  .left { padding-right: 1px; gap: 7px; }
  ue-my-blueprint { flex: 1; }
  .center { padding-top: 1px; }
  .tabs { display: flex; gap: 1px; padding: 6px 0 0 5px; }
  ue-graph { flex: 1; margin-bottom: 6px; }
  .right { padding-top: 1px; }
  .right ue-panel-tab { margin-left: 5px; }
  .details { flex: 1; background: #3e3e3e; }
</style>
<ue-title-bar></ue-title-bar>
<ue-menu-bar></ue-menu-bar>
<div class="work">
  <div class="left">
    <ue-components-panel></ue-components-panel>
    <ue-my-blueprint></ue-my-blueprint>
  </div>
  <div class="center">
    <ue-toolbar></ue-toolbar>
    <div class="tabs">
      <ue-panel-tab idle><ue-icon slot="icon" name="viewport"></ue-icon>뷰포트</ue-panel-tab>
      <ue-panel-tab idle><ue-icon slot="icon" name="fn" style="color:#b4c4f4"></ue-icon>Construction Script</ue-panel-tab>
      <ue-panel-tab current><ue-icon slot="icon" name="blocks" w="21" h="20"></ue-icon>이벤트그래프</ue-panel-tab>
    </div>
    <ue-graph></ue-graph>
    <ue-compiler-results></ue-compiler-results>
  </div>
  <div class="right">
    <ue-panel-tab><ue-icon slot="icon" name="details"></ue-icon>디테일</ue-panel-tab>
    <div class="details"></div>
  </div>
</div>
`);
</script>
</body>
</html>
